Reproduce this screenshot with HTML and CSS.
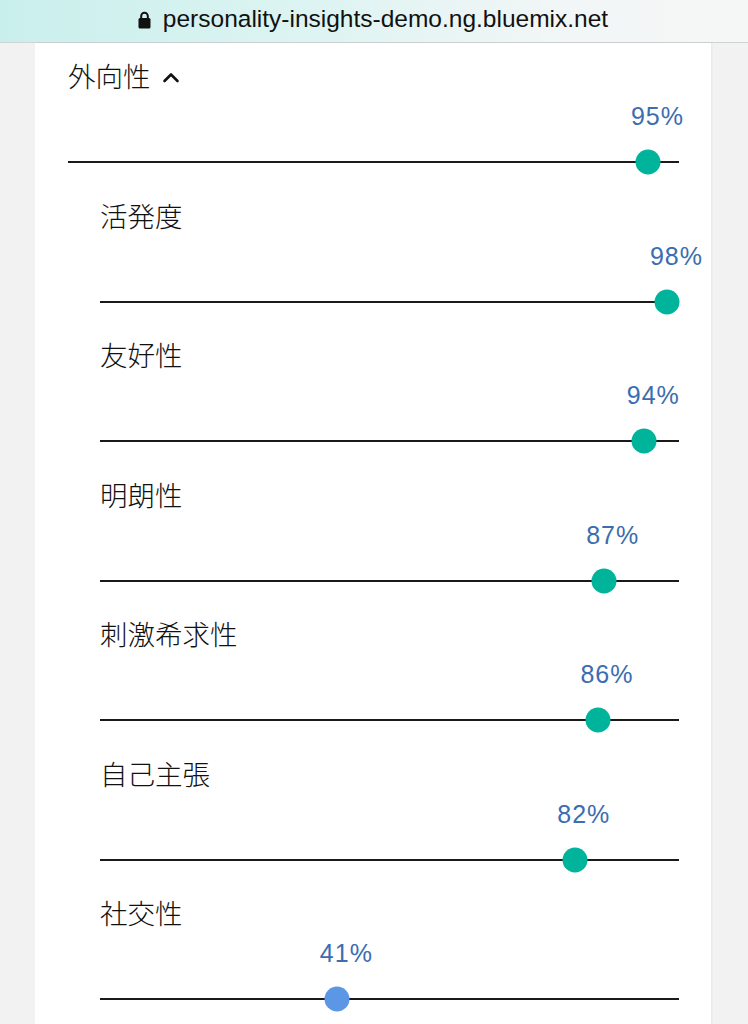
FILE: index.html
```html
<!DOCTYPE html>
<html lang="ja">
<head>
<meta charset="utf-8">
<title>Personality Insights</title>
<link rel="stylesheet" href="styles.css">
</head>
<body>
<header class="urlbar">
  <svg class="lock" width="13" height="18" viewBox="0 0 13 18" aria-hidden="true">
    <path d="M3.2 8 V5 A3.3 3.3 0 0 1 9.8 5 V8" fill="none" stroke="#111" stroke-width="2"/>
    <rect x="0.5" y="7" width="12" height="10.5" rx="1.5" fill="#111"/>
  </svg>
  <span class="url">personality-insights-demo.ng.bluemix.net</span>
</header>
<main class="card">
  <section class="trait trait-main">
    <h2 class="trait-title">外向性
      <svg class="chevron" width="18" height="12" viewBox="0 0 18 12" aria-hidden="true">
        <polyline points="2.5,10 9,3.5 15.5,10" fill="none" stroke="#111" stroke-width="2.6" stroke-linecap="round" stroke-linejoin="round"/>
      </svg>
    </h2>
    <div class="meter">
      <span class="meter-value" style="left:95%">95%</span>
      <div class="meter-track"><span class="knob" style="left:95%"></span></div>
    </div>
  </section>
  <section class="trait trait-sub">
    <h3 class="trait-title">活発度</h3>
    <div class="meter">
      <span class="meter-value" style="left:98%">98%</span>
      <div class="meter-track"><span class="knob" style="left:98%"></span></div>
    </div>
  </section>
  <section class="trait trait-sub">
    <h3 class="trait-title">友好性</h3>
    <div class="meter">
      <span class="meter-value" style="left:94%">94%</span>
      <div class="meter-track"><span class="knob" style="left:94%"></span></div>
    </div>
  </section>
  <section class="trait trait-sub">
    <h3 class="trait-title">明朗性</h3>
    <div class="meter">
      <span class="meter-value" style="left:87%">87%</span>
      <div class="meter-track"><span class="knob" style="left:87%"></span></div>
    </div>
  </section>
  <section class="trait trait-sub">
    <h3 class="trait-title">刺激希求性</h3>
    <div class="meter">
      <span class="meter-value" style="left:86%">86%</span>
      <div class="meter-track"><span class="knob" style="left:86%"></span></div>
    </div>
  </section>
  <section class="trait trait-sub">
    <h3 class="trait-title">自己主張</h3>
    <div class="meter">
      <span class="meter-value" style="left:82%">82%</span>
      <div class="meter-track"><span class="knob" style="left:82%"></span></div>
    </div>
  </section>
  <section class="trait trait-sub">
    <h3 class="trait-title">社交性</h3>
    <div class="meter">
      <span class="meter-value" style="left:41%">41%</span>
      <div class="meter-track"><span class="knob knob-low" style="left:41%"></span></div>
    </div>
  </section>
</main>
</body>
</html>
```
FILE: styles.css
```css
* { box-sizing: border-box; }
html, body {
  margin: 0;
  padding: 0;
  background: #f2f2f2;
  height: 1024px;
  overflow: hidden;
}
body {
  font-family: "Liberation Sans", "Noto Sans CJK JP", sans-serif;
  color: #111;
}
.urlbar {
  height: 43px;
  display: flex;
  align-items: center;
  justify-content: center;
  gap: 12px;
  padding-right: 2px;
  background: linear-gradient(90deg, #c9efec 0%, #dcf4f2 40%, #f2f6f6 75%, #f6f6f6 100%);
  border-bottom: 1px solid #cfd3d3;
}
.lock { display: block; margin-top: -3px; }
.url {
  font-family: "Liberation Sans", sans-serif;
  font-size: 24.5px;
  color: #111;
  margin-top: -5px;
}
.card {
  margin-left: 35px;
  width: 676px;
  min-height: 1000px;
  background: #fff;
  padding: 18px 32px 0 33px;
  box-shadow: 1px 0 2px rgba(0,0,0,0.05);
}
.trait-title {
  margin: 0;
  font-family: "Noto Sans CJK JP", sans-serif;
  font-weight: 300;
  font-size: 27.5px;
  line-height: 28px;
  height: 34px;
  padding-bottom: 6px;
  color: #111;
  display: flex;
  align-items: center;
}
.chevron { margin-left: 11px; margin-top: 3px; }
.trait-sub { padding-left: 32px; }
.meter {
  position: relative;
  padding-top: 6px;
  padding-bottom: 37.5px;
}
.meter-value {
  display: block;
  position: relative;
  width: max-content;
  transform: translateX(calc(-50% + 9px));
  font-family: "Liberation Sans", sans-serif;
  font-size: 25px;
  letter-spacing: 1px;
  line-height: 30px;
  color: #3b6db0;
}
.meter-track {
  position: relative;
  margin-top: 30px;
  height: 2px;
  background: #1a1a1a;
}
.knob {
  position: absolute;
  top: 50%;
  width: 25px;
  height: 25px;
  border-radius: 50%;
  background: #00b39b;
  transform: translate(-50%, -50%);
}
.knob-low { background: #5b97e5; }
```
